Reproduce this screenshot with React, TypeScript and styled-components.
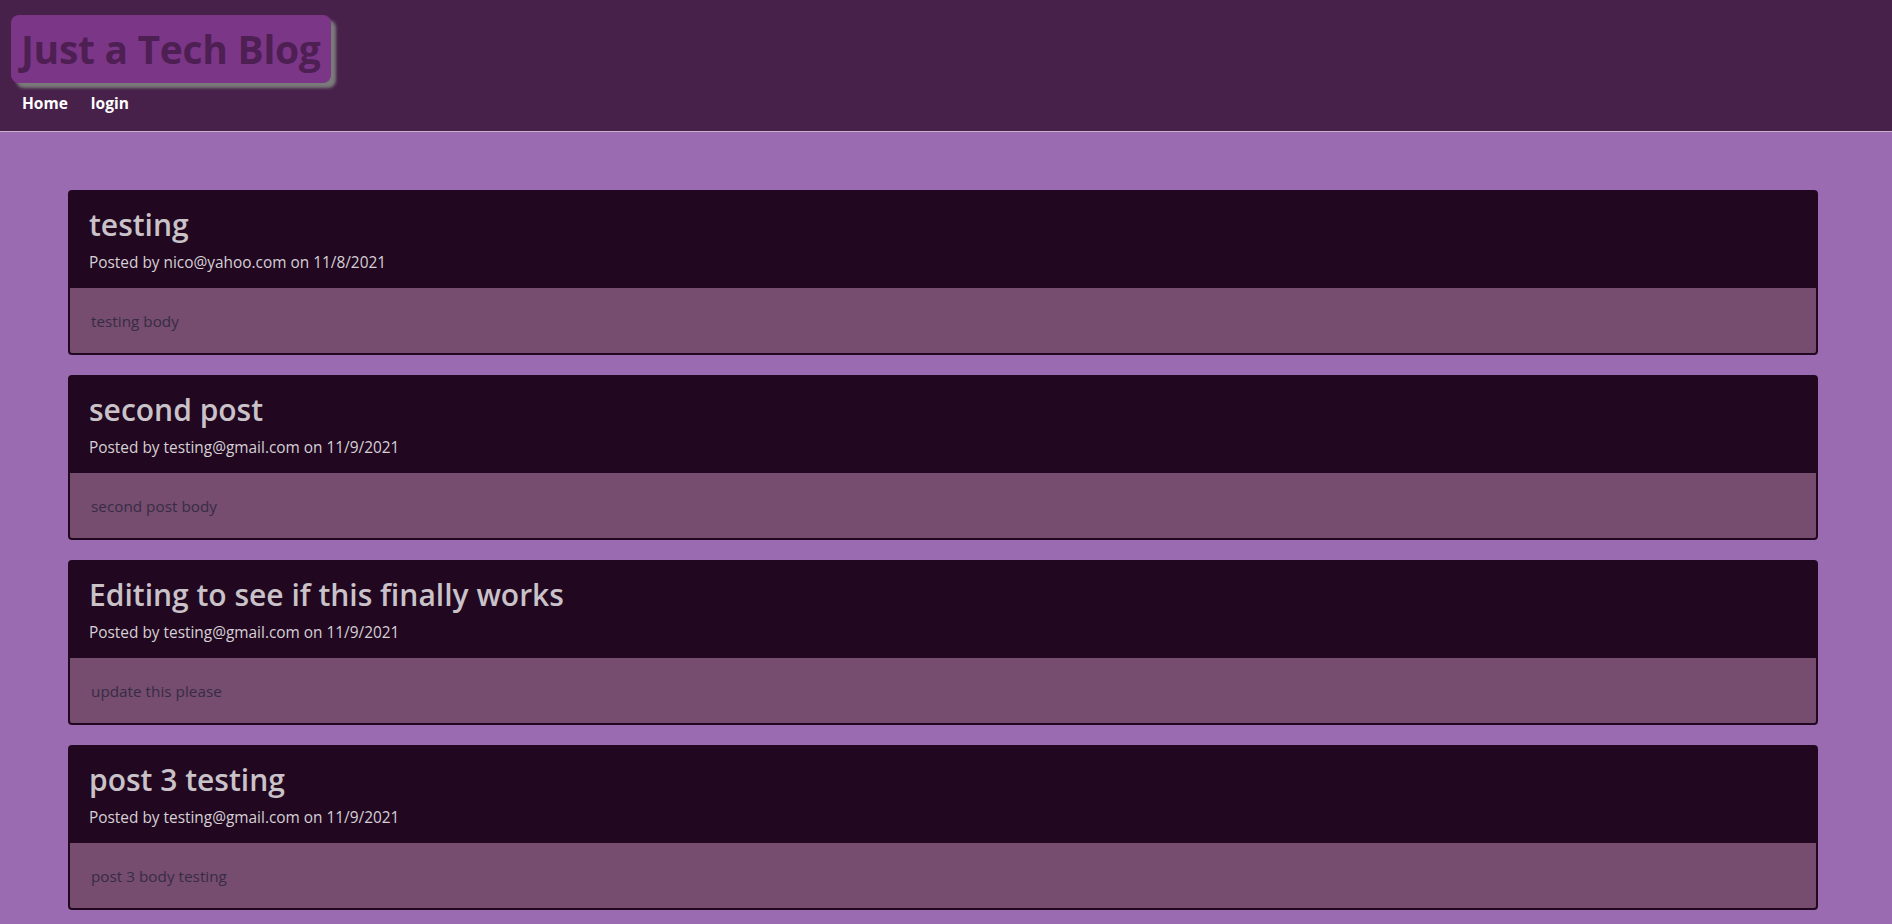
import React from "react";
import styled, { createGlobalStyle } from "styled-components";

const Global = createGlobalStyle`
  html, body { margin: 0; padding: 0; }
  body {
    background: #9a6bb0;
    font-family: "Open Sans", "Noto Sans", sans-serif;
    min-height: 924px;
  }
`;

const Header = styled.header`
  background: #48214b;
  height: 131px;
  border-bottom: 1px solid #c9b3cc;
  box-sizing: content-box;
  display: flex;
  flex-direction: column;
  align-items: flex-start;
  padding: 0 0 0 11px;
`;

const TitleBox = styled.h1`
  margin: 15px 0 0 0;
  height: 68px;
  box-sizing: border-box;
  padding: 0 10px 0 10px;
  background: #7c3688;
  border-radius: 8px;
  box-shadow: 5px 5px 3px #7a7a7a;
  color: #4e1f53;
  font-size: 39px;
  font-weight: 700;
  line-height: 68px;
  letter-spacing: -0.3px;
`;

const Nav = styled.nav`
  display: flex;
  gap: 23px;
  margin: 9px 0 0 11px;
`;

const NavLink = styled.a`
  color: #ffffff;
  font-weight: 700;
  font-size: 15.5px;
  text-decoration: none;
  cursor: pointer;
`;

const Main = styled.main`
  display: flex;
  flex-direction: column;
  gap: 20px;
  padding: 58px 74px 20px 68px;
`;

const Card = styled.article`
  background: #210820;
  border: 2px solid #210820;
  border-radius: 4px;
  overflow: hidden;
`;

const CardHead = styled.div`
  height: 96px;
  box-sizing: border-box;
  padding: 12px 18px 0 19px;
`;

const PostTitle = styled.h2`
  margin: 0;
  color: #c9c2c9;
  font-size: 30px;
  font-weight: 600;
  line-height: 42px;
`;

const Meta = styled.p`
  margin: 7px 0 0 0;
  color: #d6cfd6;
  font-size: 15.4px;
  line-height: 20px;
`;

const CardBody = styled.div`
  background: #764c6f;
  height: 65px;
  box-sizing: border-box;
  padding: 0 21px;
  display: flex;
  align-items: center;
  color: #362c45;
  font-size: 15.3px;
`;

const posts = [
  { title: "testing", author: "nico@yahoo.com", date: "11/8/2021", body: "testing body" },
  { title: "second post", author: "testing@gmail.com", date: "11/9/2021", body: "second post body" },
  { title: "Editing to see if this finally works", author: "testing@gmail.com", date: "11/9/2021", body: "update this please" },
  { title: "post 3 testing", author: "testing@gmail.com", date: "11/9/2021", body: "post 3 body testing" },
];

export default function App() {
  return (
    <>
      <Global />
      <Header>
        <TitleBox>Just a Tech Blog</TitleBox>
        <Nav>
          <NavLink>Home</NavLink>
          <NavLink>login</NavLink>
        </Nav>
      </Header>
      <Main>
        {posts.map((p) => (
          <Card key={p.title}>
            <CardHead>
              <PostTitle>{p.title}</PostTitle>
              <Meta>
                Posted by {p.author} on {p.date}
              </Meta>
            </CardHead>
            <CardBody>{p.body}</CardBody>
          </Card>
        ))}
      </Main>
    </>
  );
}
